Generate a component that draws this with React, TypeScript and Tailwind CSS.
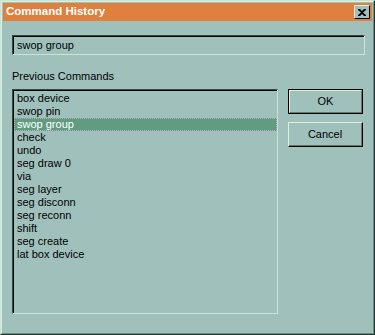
import React from "react";

const commands = [
  "box device",
  "swop pin",
  "swop group",
  "check",
  "undo",
  "seg draw 0",
  "via",
  "seg layer",
  "seg disconn",
  "seg reconn",
  "shift",
  "seg create",
  "lat box device",
];

const font = { fontFamily: '"Liberation Sans", Arial, sans-serif' };

export default function App() {
  return (
    <div
      className="w-[375px] h-[335px] bg-[#a0c0bc] border-t border-l border-[#c8e4d4] border-r border-b border-r-[#203830] border-b-[#203830] text-[11px] text-black flex flex-col"
      style={font}
    >
      <div className="flex flex-col h-full border-t border-l border-[#d8f0e0] border-r border-b border-r-[#6a8c84] border-b-[#6a8c84] p-px">
        {/* title bar */}
        <div className="h-[18px] bg-[#e0803f] flex items-center justify-between pl-[3px] pr-[2px]">
          <span className="text-white font-bold text-[11.5px] leading-none">
            Command History
          </span>
          <button className="w-[16px] h-[14px] bg-[#a0c0bc] border-t border-l border-[#d8f0e0] border-r border-b border-r-black border-b-black flex items-center justify-center">
            <svg width="8" height="7" viewBox="0 0 8 7">
              <path d="M0 0h2l2 2 2-2h2v1L5 3.5 8 6v1H6L4 5 2 7H0V6l3-2.5L0 1z" fill="#000" />
            </svg>
          </button>
        </div>

        <div className="flex flex-col pl-[9px] pt-[14px]">
          {/* input */}
          <div className="w-[353px] h-[20px] border-t border-l border-[#2c4c40] border-r border-b border-r-[#c8e4d4] border-b-[#c8e4d4]">
            <div className="h-full border-t border-l border-black flex items-center pl-[3px] leading-none">
              swop group
            </div>
          </div>

          <div className="mt-[15px] leading-[13px]">Previous Commands</div>

          <div className="flex mt-[6px]">
            {/* list */}
            <div className="w-[266px] h-[225px] border-t border-l border-[#2c4c40] border-r border-b border-r-[#c8e4d4] border-b-[#c8e4d4]">
              <div className="h-full border-t border-l border-black pt-[1px]">
                {commands.map((c) =>
                  c === "swop group" ? (
                    <div
                      key={c}
                      className="h-[13px] leading-[11px] bg-[#5f9c80] text-white border border-dotted border-[#c8a0c8] pl-[2px]"
                    >
                      {c}
                    </div>
                  ) : (
                    <div key={c} className="h-[13px] leading-[13px] pl-[3px]">
                      {c}
                    </div>
                  )
                )}
              </div>
            </div>

            {/* buttons */}
            <div className="flex flex-col gap-[8px] ml-[10px]">
              <button className="w-[75px] h-[25px] border border-black">
                <div className="h-full border-t border-l border-[#d8f0e0] border-r border-b border-r-[#5c7c74] border-b-[#5c7c74] flex items-center justify-center">
                  OK
                </div>
              </button>
              <button className="w-[75px] h-[25px] border-t border-l border-[#d8f0e0] border-r border-b border-r-black border-b-black">
                <div className="h-full border-r border-b border-[#5c7c74] flex items-center justify-center">
                  Cancel
                </div>
              </button>
            </div>
          </div>
        </div>
      </div>
    </div>
  );
}
